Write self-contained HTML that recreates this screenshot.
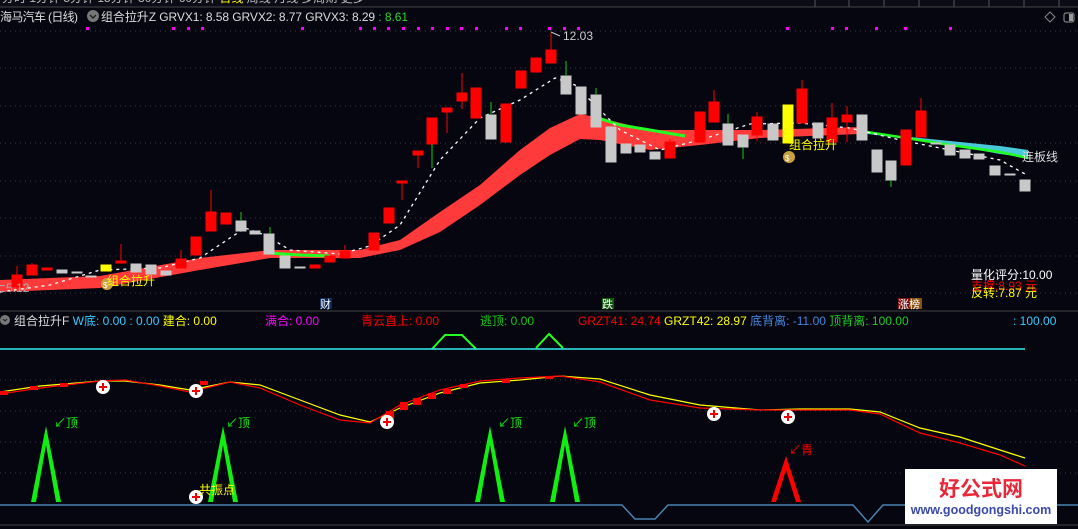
<!DOCTYPE html>
<html><head><meta charset="utf-8"><style>
body{margin:0;background:#05060f;width:1078px;height:529px;overflow:hidden;font-family:"Liberation Sans","Noto Sans CJK SC",sans-serif}
svg{position:absolute;left:0;top:0}
text{font-family:"Liberation Sans","Noto Sans CJK SC",sans-serif}
</style></head><body>
<svg width="1078" height="529" viewBox="0 0 1078 529">
<rect x="0" y="0" width="1078" height="7" fill="#0b0c16"/>
<line x1="0" y1="7" x2="1078" y2="7" stroke="#444" />
<text x="2" y="2" font-size="12" fill="#bbb">分时 1分钟 5分钟 15分钟 30分钟 60分钟 <tspan fill="#ff0">日线</tspan> 周线 月线 多周期 更多</text>
<g stroke="#555"><line x1="815" y1="0" x2="815" y2="7"/><line x1="849" y1="0" x2="849" y2="7"/><line x1="884" y1="0" x2="884" y2="7"/><line x1="919" y1="0" x2="919" y2="7"/><line x1="954" y1="0" x2="954" y2="7"/><line x1="989" y1="0" x2="989" y2="7"/><line x1="1024" y1="0" x2="1024" y2="7"/><line x1="1059" y1="0" x2="1059" y2="7"/></g>
<text x="0" y="21" font-size="12" fill="#ddd" textLength="78">海马汽车 (日线)</text>
<circle cx="93" cy="16" r="6" fill="#777"/><path d="M90 15 l3 3 l3 -3" stroke="#222" fill="none" stroke-width="1.5"/>
<text x="101" y="21" font-size="12" fill="#ddd" textLength="307">组合拉升Z GRVX1: 8.58 GRVX2: 8.77 GRVX3: 8.29 <tspan fill="#2ed62e">: 8.61</tspan></text>
<path d="M1050 12 l5 5 l-5 5 l-5 -5z" stroke="#888" fill="none"/>
<rect x="1064" y="13" width="10" height="9" rx="2" stroke="#999" fill="none"/><rect x="1069" y="14" width="4" height="7" fill="#999"/>
<g stroke="#3a3a48" stroke-dasharray="1 4">
<line x1="0" y1="31" x2="1078" y2="31"/><line x1="0" y1="68" x2="1078" y2="68"/><line x1="0" y1="106" x2="1078" y2="106"/><line x1="0" y1="143" x2="1078" y2="143"/><line x1="0" y1="181" x2="1078" y2="181"/><line x1="0" y1="218" x2="1078" y2="218"/><line x1="0" y1="256" x2="1078" y2="256"/><line x1="0" y1="293" x2="1078" y2="293"/>
<line x1="0" y1="380" x2="1078" y2="380"/><line x1="0" y1="411" x2="1078" y2="411"/><line x1="0" y1="442" x2="1078" y2="442"/><line x1="0" y1="473" x2="1078" y2="473"/>
</g>
<g fill="#f0f">
<rect x="86" y="27" width="3" height="3"/><rect x="172" y="27" width="3" height="3"/><rect x="187" y="27" width="3" height="3"/><rect x="201" y="27" width="3" height="3"/><rect x="301" y="27" width="3" height="3"/><rect x="359" y="27" width="3" height="3"/><rect x="373" y="27" width="3" height="3"/><rect x="387" y="27" width="3" height="3"/><rect x="402" y="27" width="3" height="3"/><rect x="417" y="27" width="3" height="3"/><rect x="431" y="27" width="3" height="3"/><rect x="446" y="27" width="3" height="3"/><rect x="460" y="27" width="3" height="3"/><rect x="475" y="27" width="3" height="3"/><rect x="505" y="27" width="3" height="3"/><rect x="519" y="27" width="3" height="3"/><rect x="548" y="27" width="3" height="3"/><rect x="563" y="27" width="3" height="3"/><rect x="577" y="27" width="3" height="3"/><rect x="786" y="27" width="3" height="3"/><rect x="831" y="27" width="3" height="3"/><rect x="845" y="27" width="3" height="3"/><rect x="875" y="27" width="3" height="3"/><rect x="904" y="27" width="3" height="3"/><rect x="949" y="27" width="3" height="3"/>
</g>
<path d="M0 280 L100 276 L200 258 L270 250 L360 250 L400 240 L440 212 L480 185 L520 150 L550 128 L580 114 L600 118 L650 130 L700 130 L760 130 L860 127 L860 134 L760 138 L700 145 L650 150 L600 140 L580 139 L550 155 L520 175 L480 205 L440 232 L400 250 L360 258 L270 258 L200 270 L100 288 L0 292Z" fill="#ff3a3a"/>
<polyline points="268,253 300,255 330,256" stroke="#2f2" stroke-width="3" fill="none"/>
<polyline points="595,117 620,125 650,130 685,136" stroke="#2f2" stroke-width="3" fill="none"/>
<path d="M860 130 L900 136 L950 141 L1000 146 L1028 150 L1028 158 L1000 154 L950 145 L900 138 L860 133Z" fill="#48c8d8"/>
<polyline points="860,131 900,137 950,145 1000,152 1028,158" stroke="#2f2" stroke-width="2.5" fill="none"/>
<polyline points="0,292 50,285 100,270 160,268 200,258 245,228 265,235 290,250 340,254 370,246 400,225 440,160 480,118 520,100 555,78 575,85 590,100 620,130 660,150 700,140 750,124 800,123 850,128 900,140 950,150 1000,160 1025,174" stroke="#fff" stroke-width="1.3" stroke-dasharray="3 4" fill="none"/>
<g stroke-width="1">
<g fill="#f00" stroke="#f00"><line x1="17" y1="266" x2="17" y2="290"/><rect x="12" y="275" width="10" height="12"/><line x1="32" y1="263" x2="32" y2="275"/><rect x="27" y="265" width="10" height="10"/><rect x="42" y="268" width="10" height="2"/><line x1="121" y1="244" x2="121" y2="263"/><rect x="116" y="261" width="10" height="2"/><line x1="181" y1="250" x2="181" y2="268"/><rect x="176" y="259" width="10" height="9"/><rect x="191" y="237" width="10" height="18"/><line x1="211" y1="190" x2="211" y2="231"/><rect x="206" y="212" width="10" height="19"/><rect x="221" y="213" width="10" height="11"/><rect x="310" y="265" width="10" height="3"/><rect x="325" y="256" width="10" height="6"/><line x1="345" y1="245" x2="345" y2="258"/><rect x="340" y="251" width="10" height="7"/><rect x="369" y="233" width="10" height="17"/><rect x="384" y="208" width="10" height="15"/><line x1="402" y1="181" x2="402" y2="200"/><rect x="397" y="181" width="10" height="2"/><line x1="418" y1="151" x2="418" y2="168"/><rect x="413" y="151" width="10" height="4"/><rect x="427" y="118" width="10" height="26"/><line x1="447" y1="109" x2="447" y2="133"/><rect x="442" y="108" width="10" height="4"/><line x1="462" y1="73" x2="462" y2="109"/><rect x="457" y="93" width="10" height="8"/><rect x="471" y="88" width="10" height="30"/><rect x="501" y="104" width="10" height="38"/><rect x="516" y="71" width="10" height="17"/><rect x="531" y="58" width="10" height="14"/><line x1="551" y1="33" x2="551" y2="63"/><rect x="546" y="50" width="10" height="13"/><line x1="670" y1="139" x2="670" y2="158"/><rect x="665" y="142" width="10" height="16"/><rect x="695" y="112" width="10" height="30"/><line x1="714" y1="90" x2="714" y2="122"/><rect x="709" y="102" width="10" height="20"/><line x1="757" y1="112" x2="757" y2="141"/><rect x="752" y="117" width="10" height="18"/><line x1="802" y1="80" x2="802" y2="123"/><rect x="797" y="89" width="10" height="34"/><line x1="832" y1="103" x2="832" y2="143"/><rect x="827" y="118" width="10" height="24"/><line x1="847" y1="106" x2="847" y2="142"/><rect x="842" y="115" width="10" height="7"/><rect x="901" y="130" width="10" height="35"/><line x1="921" y1="98" x2="921" y2="137"/><rect x="916" y="111" width="10" height="26"/></g>
<g fill="#c8c8c8" stroke="#c8c8c8"><rect x="57" y="270" width="10" height="3"/><rect x="72" y="272" width="10" height="1"/><rect x="86" y="276" width="10" height="1"/><rect x="131" y="264" width="10" height="8"/><rect x="146" y="265" width="10" height="9"/><rect x="161" y="271" width="10" height="4"/><rect x="236" y="221" width="10" height="10"/><rect x="250" y="231" width="10" height="3"/><rect x="264" y="234" width="10" height="20"/><rect x="280" y="256" width="10" height="12"/><rect x="295" y="267" width="10" height="1"/><rect x="486" y="115" width="10" height="24"/><rect x="561" y="76" width="10" height="18"/><rect x="576" y="87" width="10" height="27"/><rect x="591" y="95" width="10" height="32"/><rect x="606" y="127" width="10" height="35"/><rect x="621" y="144" width="10" height="9"/><rect x="635" y="145" width="10" height="7"/><rect x="650" y="152" width="10" height="7"/><rect x="723" y="124" width="10" height="21"/><rect x="738" y="135" width="10" height="12"/><rect x="768" y="124" width="10" height="16"/><rect x="813" y="123" width="10" height="15"/><rect x="857" y="115" width="10" height="25"/><rect x="872" y="150" width="10" height="22"/><rect x="886" y="161" width="10" height="19"/><rect x="931" y="143" width="10" height="1"/><rect x="945" y="145" width="10" height="10"/><rect x="960" y="150" width="10" height="8"/><rect x="974" y="154" width="10" height="5"/><rect x="990" y="166" width="10" height="9"/><rect x="1005" y="174" width="10" height="1"/><rect x="1020" y="180" width="10" height="11"/></g>
<g fill="#ff0" stroke="#ff0"><rect x="101" y="265" width="10" height="6"/><rect x="783" y="105" width="10" height="38"/></g>
<g stroke="#1c1"><line x1="241" y1="212" x2="241" y2="221"/><line x1="270" y1="227" x2="270" y2="234"/><line x1="432" y1="144" x2="432" y2="168"/><line x1="491" y1="102" x2="491" y2="115"/><line x1="566" y1="61" x2="566" y2="76"/><line x1="596" y1="88" x2="596" y2="95"/><line x1="728" y1="114" x2="728" y2="124"/><line x1="743" y1="147" x2="743" y2="159"/><line x1="891" y1="180" x2="891" y2="187"/></g>
</g>
<text x="563" y="40" font-size="12" fill="#ccc">12.03</text>
<path d="M560 36 l-9 -4" stroke="#ccc"/>
<text x="-4" y="292" font-size="12" fill="#aaa">⊏5.12</text>
<circle cx="107" cy="284" r="6" fill="#c8a040"/><text x="103" y="288" font-size="8" fill="#fff">$</text>
<text x="107" y="285" font-size="12" fill="#ff0">组合拉升</text>
<circle cx="789" cy="157" r="6" fill="#c8a040"/><text x="785" y="161" font-size="8" fill="#fff">$</text>
<text x="789" y="149" font-size="12" fill="#ff0">组合拉升</text>
<text x="1022" y="161" font-size="12" fill="#ddd">连板线</text>
<text x="971" y="279" font-size="12" fill="#fff">量化评分:10.00</text>
<text x="971" y="290" font-size="12" fill="#f00">支撑:8.93 元</text>
<text x="971" y="297" font-size="12" fill="#ff0">反转:7.87 元</text>
<rect x="320" y="298" width="12" height="11" fill="#0a2a5a"/><text x="320" y="308" font-size="11" fill="#fff">财</text>
<rect x="602" y="298" width="12" height="11" fill="#0a5a0a"/><text x="602" y="308" font-size="11" fill="#fff">跌</text>
<rect x="898" y="298" width="12" height="11" fill="#7a1010"/><rect x="910" y="298" width="12" height="11" fill="#8a5010"/><text x="898" y="308" font-size="11" fill="#fff">涨榜</text>
<line x1="0" y1="311" x2="1078" y2="311" stroke="#444"/>
<circle cx="5" cy="320" r="5" fill="#777"/><path d="M3 319 l2 2 l2 -2" stroke="#222" fill="none"/>
<text x="14" y="325" font-size="12" fill="#ddd">组合拉升F <tspan fill="#3cf">W底: 0.00 : 0.00</tspan> <tspan fill="#ff0">建合: 0.00</tspan></text>
<text x="265" y="325" font-size="12" fill="#f0f">满合: 0.00</text>
<text x="361" y="325" font-size="12" fill="#f00">青云直上: 0.00</text>
<text x="480" y="325" font-size="12" fill="#1c1">逃顶: 0.00</text>
<text x="578" y="325" font-size="12" fill="#f00">GRZT41: 24.74 <tspan fill="#ff0">GRZT42: 28.97</tspan> <tspan fill="#48d">底背离: -11.00</tspan> <tspan fill="#2c2">顶背离: 100.00</tspan></text>
<text x="1013" y="325" font-size="12" fill="#3cf">: 100.00</text>
<path d="M432 349 L445 335 L462 335 L476 349" stroke="#2f2" stroke-width="2" fill="none"/>
<path d="M536 348 L549 334 L563 348" stroke="#2f2" stroke-width="2" fill="none"/>
<line x1="0" y1="349" x2="1025" y2="349" stroke="#3ee" stroke-width="1.5"/>
<polyline points="0,392 40,386 100,381 125,381 160,385 190,390 230,382 260,385 300,400 340,415 370,422 400,408 440,393 480,383 520,380 560,376 600,379 650,395 700,405 760,410 800,409 850,409 880,412 920,428 960,437 1000,450 1025,458" stroke="#ff0" stroke-width="1.2" fill="none"/>
<polyline points="0,394 40,388 100,381 125,380 160,386 190,392 230,382 260,388 300,405 340,420 370,423 400,405 440,390 480,381 520,378 560,376 600,382 650,400 700,408 760,410 800,410 850,410 880,414 920,433 960,443 1000,455 1025,466" stroke="#f00" stroke-width="1.2" fill="none"/>
<g fill="#f00"><rect x="0" y="391" width="8" height="4"/><rect x="30" y="386" width="8" height="4"/><rect x="60" y="383" width="8" height="4"/><rect x="100" y="380" width="8" height="4"/><rect x="200" y="381" width="8" height="4"/><rect x="386" y="411" width="8" height="8"/><rect x="400" y="402" width="8" height="8"/><rect x="413" y="398" width="8" height="7"/><rect x="428" y="393" width="8" height="6"/><rect x="443" y="389" width="8" height="5"/><rect x="460" y="384" width="8" height="4"/><rect x="502" y="379" width="8" height="4"/><rect x="545" y="376" width="8" height="3"/></g>
<g><circle cx="103" cy="387" r="7" fill="#fff"/><path d="M99 387h8M103 383v8" stroke="#e00" stroke-width="2"/>
<circle cx="196" cy="391" r="7" fill="#fff"/><path d="M192 391h8M196 387v8" stroke="#e00" stroke-width="2"/>
<circle cx="387" cy="422" r="7" fill="#fff"/><path d="M383 422h8M387 418v8" stroke="#e00" stroke-width="2"/>
<circle cx="714" cy="414" r="7" fill="#fff"/><path d="M710 414h8M714 410v8" stroke="#e00" stroke-width="2"/>
<circle cx="788" cy="417" r="7" fill="#fff"/><path d="M784 417h8M788 413v8" stroke="#e00" stroke-width="2"/>
<circle cx="196" cy="497" r="7" fill="#fff"/><path d="M192 497h8M196 493v8" stroke="#e00" stroke-width="2"/></g>
<g fill="#1e1"><path d="M31 502 L46 426 L61 502 L56 502 L46 445 L36 502Z"/><path d="M208 502 L223 426 L238 502 L233 502 L223 445 L213 502Z"/><path d="M475 502 L490 426 L505 502 L500 502 L490 445 L480 502Z"/><path d="M550 502 L565 426 L580 502 L575 502 L565 445 L555 502Z"/></g>
<path d="M771 502 L786 456 L801 502 L796 502 L786 470 L776 502Z" fill="#f00"/>
<g font-size="12" fill="#1e1"><text x="54" y="427">↙顶</text><text x="226" y="427">↙顶</text><text x="498" y="427">↙顶</text><text x="572" y="427">↙顶</text></g>
<text x="789" y="454" font-size="12" fill="#f00">↙青</text>
<text x="199" y="494" font-size="12" fill="#ff0">共振点</text>
<polyline points="0,505 622,505 635,519 655,519 668,505 853,505 868,522 883,505 1078,505" stroke="#4a82b0" stroke-width="1.5" fill="none"/>
<line x1="0" y1="525" x2="1078" y2="525" stroke="#444"/>
<rect x="905" y="469" width="152" height="55" fill="#fff"/>
<text x="981" y="496" font-size="21" font-weight="bold" fill="#e8283a" text-anchor="middle">好公式网</text>
<text x="981" y="514" font-size="12.5" font-weight="bold" fill="#3a4aa8" text-anchor="middle">www.goodgongshi.com</text>
</svg>
</body></html>
